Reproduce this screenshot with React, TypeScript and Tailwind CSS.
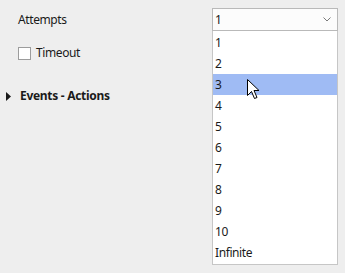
import { useState } from "react";

const OPTIONS = ["1", "2", "3", "4", "5", "6", "7", "8", "9", "10", "Infinite"];

const Cursor = () => (
  <svg width="13" height="21" viewBox="0 0 13 21" className="absolute left-[247px] top-[79px]">
    <path
      d="M0.5 0.5 L0.5 16.5 L4.5 12.5 L7.5 19.5 L10 18.5 L7 11.5 L12 11.5 Z"
      fill="#ffffff"
      stroke="#000000"
      strokeWidth="1"
      strokeLinejoin="miter"
    />
  </svg>
);

export default function App() {
  const [selected] = useState("1");
  const hovered = "3";

  return (
    <div
      className="relative w-[345px] h-[273px] bg-[#eeeeee] text-[12px] tracking-[-0.4px] text-[#1a1a1a] overflow-hidden"
      style={{ fontFamily: '"Segoe UI", "Noto Sans", sans-serif' }}
    >
      {/* Attempts row */}
      <div className="flex items-center justify-between pl-[18px] pr-[7px] pt-[8px]">
        <span className="leading-[23px]">Attempts</span>
        <div className="flex items-center justify-between w-[126px] h-[23px] bg-[#fcfcfc] border border-[#b9b9b9] pl-[2px] pr-[6px]">
          <span>{selected}</span>
          <svg width="8" height="5" viewBox="0 0 8 5">
            <path d="M0.5 0.5 L4 4 L7.5 0.5" fill="none" stroke="#7a7a7a" strokeWidth="1" />
          </svg>
        </div>
      </div>

      {/* Timeout */}
      <div className="flex items-center gap-[5px] pl-[18px] mt-[14px]">
        <div className="w-[13px] h-[13px] bg-white border border-[#9c9c9c]" />
        <span className="leading-[16px]">Timeout</span>
      </div>

      {/* Events - Actions */}
      <div className="flex items-center gap-[9px] pl-[6px] mt-[27px]">
        <svg width="5" height="9" viewBox="0 0 5 9">
          <path d="M0 0 L5 4.5 L0 9 Z" fill="#1a1a1a" />
        </svg>
        <span className="font-bold tracking-[-0.3px] leading-[16px]">Events - Actions</span>
      </div>

      {/* Dropdown list */}
      <div className="absolute left-[212px] top-[31px] w-[126px] bg-white border border-[#c6c6c6] border-t-0 pt-[1px] pb-[1px]">
        {OPTIONS.map((o) => (
          <div
            key={o}
            className={`h-[21px] leading-[21px] pl-[2px] ${o === hovered ? "bg-[#9fbbf4]" : ""}`}
          >
            {o}
          </div>
        ))}
      </div>

      <Cursor />
    </div>
  );
}
